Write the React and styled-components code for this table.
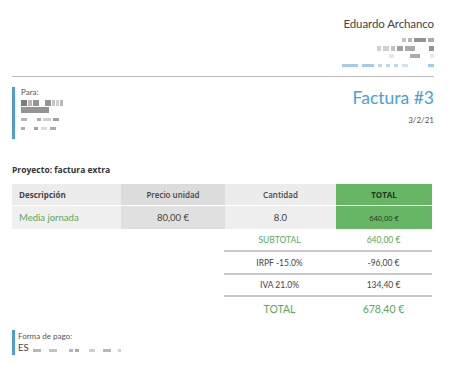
import React from 'react';
import styled, { createGlobalStyle } from 'styled-components';

const GlobalStyle = createGlobalStyle`
  html, body {
    margin: 0;
    padding: 0;
    background: #fff;
  }
  body {
    font-family: 'Lato', 'Open Sans', sans-serif;
    color: #333;
  }
`;

const Page = styled.div`
  width: 450px;
  height: 365px;
  box-sizing: border-box;
  padding: 16px 16px 0 12px;
  overflow: hidden;
`;

const Header = styled.header`
  display: flex;
  flex-direction: column;
  align-items: flex-end;
  padding-bottom: 9px;
  border-bottom: 1px solid #bdbdbd;
`;

const Issuer = styled.div`
  font-size: 11.5px;
  letter-spacing: -0.1px;
  color: #444;
  line-height: 16px;
  margin-bottom: 2px;
`;

const BlurLine = styled.div`
  display: flex;
  gap: ${p => p.$gap || 2}px;
  height: ${p => p.$h || 5}px;
  margin-top: ${p => p.$mt || 4}px;
  align-items: center;
`;

const Blk = styled.span`
  display: block;
  height: 100%;
  background: ${p => p.$c || '#888'};
  opacity: ${p => p.$o || 0.7};
`;

const Parties = styled.section`
  display: flex;
  justify-content: space-between;
  align-items: flex-start;
  margin-top: 10px;
`;

const Client = styled.div`
  border-left: 3px solid #4a9fd8;
  padding-left: 6px;
  height: 52px;
  width: 90px;
  box-sizing: border-box;
`;

const SmallLabel = styled.div`
  font-size: 8px;
  color: #555;
  line-height: 11px;
`;

const InvoiceId = styled.div`
  display: flex;
  flex-direction: column;
  align-items: flex-end;
`;

const InvoiceTitle = styled.h1`
  margin: 0;
  font-weight: 400;
  font-size: 17.5px;
  line-height: 22px;
  color: #4a9fd8;
`;

const InvoiceDate = styled.div`
  font-size: 8px;
  color: #555;
  margin-top: 6px;
`;

const Project = styled.div`
  margin-top: 25px;
  font-family: 'Open Sans', sans-serif;
  font-weight: 700;
  font-size: 8.5px;
  color: #333;
`;

const Table = styled.div`
  margin-top: 9px;
  display: grid;
  grid-template-columns: 109px 104px 111px 96px;
  row-gap: 1px;
`;

const HeadCell = styled.div`
  height: 21px;
  display: flex;
  align-items: center;
  justify-content: ${p => (p.$left ? 'flex-start' : 'center')};
  padding-left: ${p => (p.$left ? 7 : 0)}px;
  font-family: 'Open Sans', sans-serif;
  font-weight: ${p => (p.$left || p.$total ? 700 : 600)};
  font-size: 8px;
  color: ${p => (p.$total ? '#1f3a1f' : '#444')};
  background: ${p => p.$bg};
`;

const BodyCell = styled.div`
  height: 23px;
  display: flex;
  align-items: center;
  justify-content: ${p => (p.$left ? 'flex-start' : 'center')};
  padding-left: ${p => (p.$left ? 7 : 0)}px;
  font-size: ${p => (p.$total ? 7.5 : 9.5)}px;
  font-family: ${p => (p.$total ? "'Open Sans', sans-serif" : "'Lato', sans-serif")};
  color: ${p => p.$color || '#444'};
  background: ${p => p.$bg};
`;

const Summary = styled.div`
  margin-left: 212px;
  width: 208px;
  display: grid;
  grid-template-columns: 111px 97px;
`;

const SumCell = styled.div`
  height: ${p => p.$h}px;
  display: flex;
  align-items: center;
  justify-content: center;
  font-size: ${p => (p.$big ? 10.5 : 8.5)}px;
  color: ${p => (p.$green ? '#5aa85a' : '#444')};
  border-bottom: ${p => (p.$line ? '2px solid #c9c9c9' : 'none')};
`;

const Payment = styled.div`
  margin-top: 10px;
  border-left: 3px solid #4a9fd8;
  padding-left: 3px;
  height: 25px;
  display: flex;
  flex-direction: column;
  justify-content: center;
`;

const PayValue = styled.div`
  display: flex;
  align-items: center;
  gap: 4px;
  font-size: 9.5px;
  color: #444;
  line-height: 12px;
`;

const blur = (blocks, props = {}) => (
  <BlurLine {...props}>
    {blocks.map(([w, c, o], i) => (
      <Blk key={i} style={{ width: w }} $c={c} $o={o} />
    ))}
  </BlurLine>
);

export default function App() {
  return (
    <Page>
      <GlobalStyle />
      <Header>
        <Issuer>Eduardo Archanco</Issuer>
        {blur([[4, '#aaa'], [4, '#999'], [12, '#666'], [6, '#888']], { $h: 4, $mt: 0 })}
        {blur([[4, '#bbb'], [6, '#bbb'], [4, '#aaa'], [6, '#777'], [10, '#888'], [10, '#fff'], [5, '#666']], { $h: 5, $mt: 4 })}
        {blur([[5, '#ddd'], [12, '#fff'], [10, '#888'], [6, '#fff'], [4, '#ddd']], { $h: 4, $mt: 3 })}
        {blur([[16, '#7ab6e0'], [12, '#7ab6e0'], [4, '#9cc8e8'], [4, '#9cc8e8'], [4, '#9cc8e8'], [6, '#bcdaf0'], [12, '#fff'], [6, '#7ab6e0']], { $h: 3, $mt: 6, $gap: 4 })}
      </Header>

      <Parties>
        <Client>
          <SmallLabel>Para:</SmallLabel>
          {blur([[6, '#444'], [4, '#999'], [6, '#666'], [4, '#fff'], [6, '#666'], [3, '#aaa'], [3, '#bbb'], [3, '#999']], { $h: 6, $mt: 2, $gap: 1 })}
          {blur([[28, '#666']], { $h: 6, $mt: 1 })}
          {blur([[6, '#999'], [6, '#fff'], [4, '#888'], [8, '#bbb'], [6, '#777']], { $h: 3, $mt: 5, $gap: 2 })}
          {blur([[4, '#888'], [3, '#fff'], [4, '#777'], [6, '#ccc'], [6, '#888']], { $h: 3, $mt: 6, $gap: 3 })}
        </Client>
        <InvoiceId>
          <InvoiceTitle>Factura #3</InvoiceTitle>
          <InvoiceDate>3/2/21</InvoiceDate>
        </InvoiceId>
      </Parties>

      <Project>Proyecto: factura extra</Project>

      <Table>
        <HeadCell $left $bg="#ececec">Descripción</HeadCell>
        <HeadCell $bg="#dcdcdc">Precio unidad</HeadCell>
        <HeadCell $bg="#ececec">Cantidad</HeadCell>
        <HeadCell $total $bg="#66b666">TOTAL</HeadCell>
        <BodyCell $left $bg="#f0f0f0" $color="#5aa85a">Media jornada</BodyCell>
        <BodyCell $bg="#e0e0e0">80,00 €</BodyCell>
        <BodyCell $bg="#eeeeee">8.0</BodyCell>
        <BodyCell $total $bg="#66b666" $color="#1f3a1f">640,00 €</BodyCell>
      </Table>

      <Summary>
        <SumCell $h={21} $green $line>SUBTOTAL</SumCell>
        <SumCell $h={21} $green $line>640,00 €</SumCell>
        <SumCell $h={21} $line>IRPF -15.0%</SumCell>
        <SumCell $h={21} $line>-96,00 €</SumCell>
        <SumCell $h={20} $line>IVA 21.0%</SumCell>
        <SumCell $h={20} $line>134,40 €</SumCell>
        <SumCell $h={23} $green $big>TOTAL</SumCell>
        <SumCell $h={23} $green $big>678,40 €</SumCell>
      </Summary>

      <Payment>
        <SmallLabel>Forma de pago:</SmallLabel>
        <PayValue>
          ES
          {blur([[8, '#999'], [4, '#fff'], [8, '#aaa'], [8, '#fff'], [4, '#999'], [4, '#888'], [6, '#fff'], [6, '#bbb'], [4, '#fff'], [8, '#999'], [3, '#fff'], [3, '#bbb']], { $h: 3, $mt: 0, $gap: 2 })}
        </PayValue>
      </Payment>
    </Page>
  );
}
